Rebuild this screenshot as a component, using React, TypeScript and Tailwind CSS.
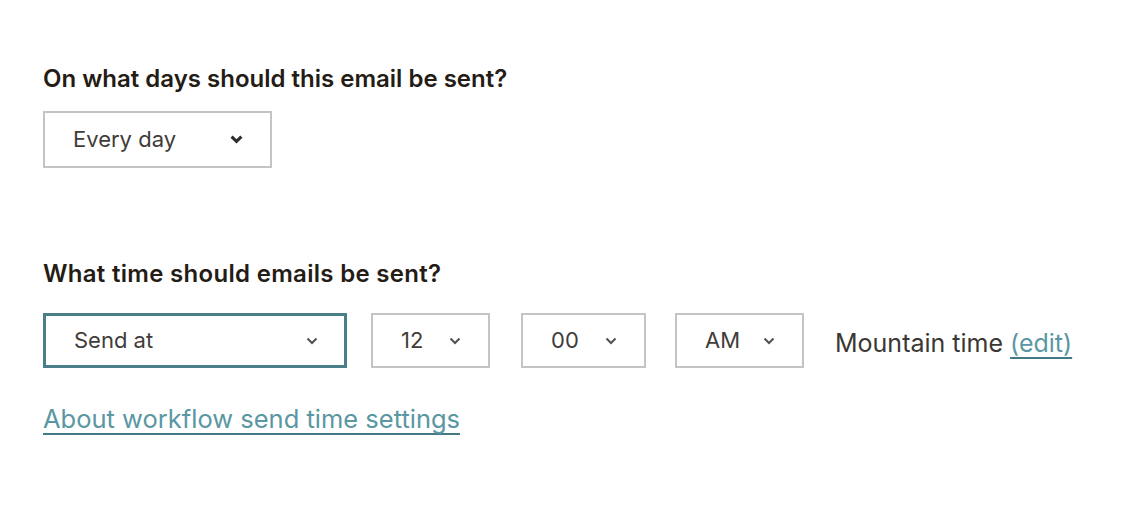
interface SelectBoxProps {
  label: string;
  width: string;
  height?: string;
  focused?: boolean;
  bold?: boolean;
}

function Chevron({ bold }: { bold?: boolean }) {
  if (bold) {
    return (
      <svg width="13" height="9" viewBox="0 0 13 9" className="text-[#2e2a27]">
        <path d="M1.6 1.6 L6.5 6.4 L11.4 1.6" fill="none" stroke="currentColor" strokeWidth="3" />
      </svg>
    );
  }
  return (
    <svg width="12" height="8" viewBox="0 0 12 8" className="text-[#55514d]">
      <path d="M1.5 1.5 L6 6 L10.5 1.5" fill="none" stroke="currentColor" strokeWidth="2" />
    </svg>
  );
}

function SelectBox({ label, width, height = "h-[55px]", focused, bold }: SelectBoxProps) {
  return (
    <div
      className={`${width} ${height} flex items-center justify-between bg-white ${
        focused ? "border-[3px] border-[#4a7e89] pl-[28px] pr-[26px]" : "border-2 border-[#c4c4c4] pl-[28px] pr-[27px]"
      }`}
    >
      <span className="text-[22px] text-[#3f3c39]">{label}</span>
      <Chevron bold={bold} />
    </div>
  );
}

export default function App() {
  return (
    <div className="w-[1142px] h-[512px] bg-white pl-[43px] pt-[63px] font-['Inter',sans-serif] text-[#241c15]">
      <h2 className="text-[24px] font-semibold leading-[32px]">On what days should this email be sent?</h2>
      <div className="mt-[16px]">
        <SelectBox label="Every day" width="w-[229px]" height="h-[57px]" bold />
      </div>

      <h2 className="mt-[90px] text-[24px] font-semibold leading-[32px] tracking-[0.3px]">What time should emails be sent?</h2>
      <div className="mt-[23px] flex items-center">
        <SelectBox label="Send at" width="w-[304px]" focused />
        <div className="ml-[24px]">
          <SelectBox label="12" width="w-[119px]" />
        </div>
        <div className="ml-[31px]">
          <SelectBox label="00" width="w-[125px]" />
        </div>
        <div className="ml-[29px]">
          <SelectBox label="AM" width="w-[129px]" />
        </div>
        <p className="ml-[31px] pt-[5px] text-[25px] leading-[32px] text-[#3a3734]">
          Mountain time{" "}
          <a
            href="#"
            className="text-[#5a97a2] underline decoration-[#437985] decoration-2 underline-offset-[5px] [text-decoration-skip-ink:none]"
          >
            (edit)
          </a>
        </p>
      </div>

      <a
        href="#"
        className="mt-[35px] inline-block text-[25.5px] leading-[32px] text-[#5a97a2] underline decoration-[#437985] decoration-2 underline-offset-[5px] [text-decoration-skip-ink:none]"
      >
        About workflow send time settings
      </a>
    </div>
  );
}
